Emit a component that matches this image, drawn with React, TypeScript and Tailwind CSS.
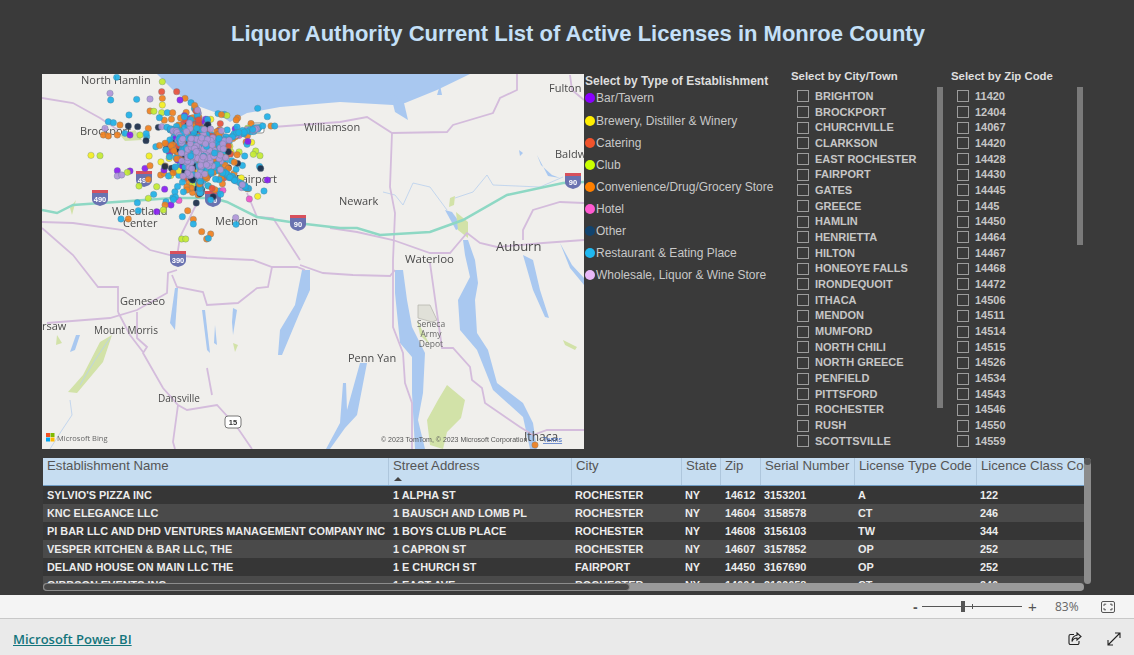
import React from "react";

const cities = ["BRIGHTON","BROCKPORT","CHURCHVILLE","CLARKSON","EAST ROCHESTER","FAIRPORT","GATES","GREECE","HAMLIN","HENRIETTA","HILTON","HONEOYE FALLS","IRONDEQUOIT","ITHACA","MENDON","MUMFORD","NORTH CHILI","NORTH GREECE","PENFIELD","PITTSFORD","ROCHESTER","RUSH","SCOTTSVILLE"];
const zips = ["11420","12404","14067","14420","14428","14430","14445","1445","14450","14464","14467","14468","14472","14506","14511","14514","14515","14526","14534","14543","14546","14550","14559"];

const legend = [
  { label: "Bar/Tavern", dot: "bg-[#8a00ff]" },
  { label: "Brewery, Distiller & Winery", dot: "bg-[#ffee00]" },
  { label: "Catering", dot: "bg-[#f0532c]" },
  { label: "Club", dot: "bg-[#c8ff00]" },
  { label: "Convenience/Drug/Grocery Store", dot: "bg-[#ff8000]" },
  { label: "Hotel", dot: "bg-[#ff5ad0]" },
  { label: "Other", dot: "bg-[#12446e]" },
  { label: "Restaurant & Eating Place", dot: "bg-[#1fb8f0]" },
  { label: "Wholesale, Liquor & Wine Store", dot: "bg-[#e8b8f8]" },
];

const rows = [
  ["SYLVIO'S PIZZA INC", "1 ALPHA ST", "ROCHESTER", "NY", "14612", "3153201", "A", "122"],
  ["KNC ELEGANCE LLC", "1 BAUSCH AND LOMB PL", "ROCHESTER", "NY", "14604", "3158578", "CT", "246"],
  ["PI BAR LLC AND DHD VENTURES MANAGEMENT COMPANY INC", "1 BOYS CLUB PLACE", "ROCHESTER", "NY", "14608", "3156103", "TW", "344"],
  ["VESPER KITCHEN & BAR LLC, THE", "1 CAPRON ST", "ROCHESTER", "NY", "14607", "3157852", "OP", "252"],
  ["DELAND HOUSE ON MAIN LLC THE", "1 E CHURCH ST", "FAIRPORT", "NY", "14450", "3167690", "OP", "252"],
  ["GIBBSON EVENTS INC", "1 EAST AVE", "ROCHESTER", "NY", "14604", "3169658", "CT", "246"],
];

const headers = ["Establishment Name", "Street Address", "City", "State", "Zip", "Serial Number", "License Type Code", "Licence Class Code"];
const gridCols = "grid-cols-[345px_183px_110px_39px_40px_94px_122px_108px]";

const C: Record<string, string> = {
  c: "#1fb0e6", l: "#b095d8", o: "#f0801e", p: "#8a1cf0", y: "#f4ee20", g: "#c4ea30", r: "#e8503a", n: "#1c2c48", h: "#f055c8",
};

// outlying pins, read off the 3x crop
const outliers: [number, number, string][] = [
  [230,22,"c"],[367,35,"g"],[365,65,"r"],[410,65,"r"],[210,70,"l"],[212,90,"c"],[290,88,"c"],[330,87,"l"],[367,85,"o"],[435,85,"o"],[367,105,"y"],[420,90,"p"],[453,98,"c"],[330,123,"o"],[267,135,"c"],[365,128,"g"],[382,128,"c"],[398,128,"o"],[205,155,"c"],[220,158,"c"],[240,165,"o"],[265,168,"n"],[293,170,"n"],[325,175,"o"],[355,172,"n"],[365,170,"l"],[195,175,"l"],[190,195,"o"],[205,198,"o"],[232,195,"o"],[255,190,"c"],[270,195,"p"],[300,195,"g"],[320,200,"c"],[318,212,"n"],[153,256,"y"],[180,257,"g"],[232,302,"p"],[270,303,"p"],[262,307,"g"],[232,318,"l"],[245,315,"l"],[315,295,"p"],[330,287,"o"],[325,328,"o"],[362,315,"o"],[372,310,"o"],[297,348,"g"],[350,350,"g"],[341,373,"c"],[325,385,"g"],[292,398,"c"],[378,395,"c"],[393,405,"p"],[375,405,"o"],[350,425,"p"],[370,420,"g"],[295,422,"c"],[243,447,"c"],[265,447,"o"],[427,440,"c"],[460,448,"o"],[460,462,"c"],[485,485,"o"],[512,492,"o"],[500,507,"o"],[505,505,"c"],[425,507,"g"],[437,507,"g"],[587,443,"l"],[588,463,"c"],[653,115,"c"],[682,140,"c"],[693,168,"o"],[704,168,"c"],[635,217,"y"],[647,243,"g"],[660,257,"g"],[640,253,"g"],[614,258,"c"],[672,363,"c"],[653,379,"y"],[682,330,"p"],[628,387,"h"],[1485,1125,"o"],
];

let seed = 4711;
const rnd = () => {
  seed = (seed * 16807) % 2147483647;
  return seed / 2147483647;
};
const gauss = () => (rnd() + rnd() + rnd() - 1.5) / 1.5;
const pick = (s: string) => s[Math.floor(rnd() * s.length)];

const makePins = () => {
  const pins: { x: number; y: number; c: string }[] = [];
  outliers.forEach(([x, y, c]) => pins.push({ x: 40 + x / 3, y: 70 + y / 3, c }));
  // wider metro area
  for (let i = 0; i < 160; i++) pins.push({ x: 205 + gauss() * 70, y: 155 + gauss() * 62, c: pick("cccooogrnyph") });
  // downtown
  for (let i = 0; i < 300; i++) pins.push({ x: 200 + gauss() * 48, y: 150 + gauss() * 48, c: pick("ooocccrnyp") });
  // main roads out of the city
  const spokes: [number, number, number, number, number, string][] = [
    [167, 128, 205, 145, 30, "ccl"],
    [205, 145, 262, 127, 44, "ccl"],
    [205, 160, 250, 190, 44, "cccclo"],
    [200, 165, 200, 198, 36, "cclon"],
    [178, 130, 190, 175, 24, "lcl"],
    [195, 106, 207, 150, 36, "llcor"],
    [208, 175, 170, 200, 10, "co"],
  ];
  spokes.forEach(([x1, y1, x2, y2, n, cols]) => {
    for (let i = 0; i < n; i++) {
      const t = rnd();
      pins.push({ x: x1 + (x2 - x1) * t + gauss() * 3, y: y1 + (y2 - y1) * t + gauss() * 3, c: pick(cols) });
    }
  });
  // wholesale pins sit on top
  for (let i = 0; i < 130; i++) pins.push({ x: 202 + gauss() * 36, y: 150 + gauss() * 34, c: pick("lllllc") });
  return pins;
};
const pins = makePins();

const roads = [
  "M42 98L73 103L100 118L118 130",
  "M273 127L340 122L367 117L392 133L447 132L453 125L493 113L500 98L517 90L517 74",
  "M392 133L390 187L395 213L393 260L393 327L403 353L405 383L412 403L412 449",
  "M42 222L73 223L123 230L150 250L170 255L207 258L253 260L272 267L297 267L305 270",
  "M42 228L73 255L98 287L118 287L118 312",
  "M47 323L110 318L137 310L167 293L168 273L177 270",
  "M137 312L137 338L147 347L143 353L163 388L178 405L187 410L217 405L237 427L252 449",
  "M118 312L130 335L143 352",
  "M178 405L173 442L175 449",
  "M272 267L268 287L257 288L238 303L207 305L203 292L177 287L172 275",
  "M300 265L323 273L353 275L390 276L395 270",
  "M430 263L438 320L442 348L453 348L470 367L472 380L482 388L485 403L520 427L533 435L547 430L584 430",
  "M330 228L357 232L393 240L430 253L450 253L467 233L480 243L497 247L543 243L584 240",
  "M523 240L523 230L533 210L560 202L584 203",
  "M570 75L572 90L584 100",
  "M197 203L180 237L177 257",
  "M247 193L257 217L273 218L300 260",
  "M207 368L212 395",
];

const rivers = [
  "M383 192L395 195L403 205L413 183L430 187L447 210",
  "M473 192L487 175L493 185L540 187L563 177",
  "M473 192L455 198",
  "M70 400L72 415L62 430L50 449",
  "M110 338L95 360L80 385",
];

const water = [
  "M157 74L173 90L190 103L217 113L230 122L247 113L280 107L340 102L393 105L405 103L437 90L470 74Z",
  "M395 270L403 270L407 300L412 327L425 353L423 393L418 420L425 449L415 449L412 393L412 357L400 343L395 293Z",
  "M463 240L468 240L475 260L478 283L475 300L477 333L488 350L497 383L523 403L533 423L537 449L530 449L523 417L493 390L477 350L460 330L458 300L470 277L465 255Z",
  "M523 255L533 260L540 290L549 318L545 317L533 290Z",
  "M560 243L572 265L584 278L584 285L570 268Z",
  "M302 270L310 270L310 290L300 312L282 355L278 355L280 330L295 305Z",
  "M343 383L346 383L347 410L360 363L367 363L357 415L345 428L330 449L326 449L340 423Z",
  "M175 288L178 288L175 330L170 323Z",
  "M202 310L205 310L210 353L207 350Z",
  "M215 325L217 345L214 343Z",
  "M233 308L237 310L233 335L232 322Z",
  "M76 335L80 335L75 350L70 352Z",
  "M437 95L440 85L442 95Z",
  "M537 155L541 165L552 175L560 178L548 176Z",
  "M519 150L523 153L520 156Z",
  "M445 210L452 212L463 227L456 230Z",
  "M390 92L404 103L408 120L395 112Z",
];

const green = [
  "M68 392L83 375L100 342L112 335L103 362L77 393Z",
  "M427 420L438 400L447 385L465 400L461 418L447 432L443 449L430 445Z",
  "M417 320L422 330L430 345L420 335Z",
  "M450 198L455 196L454 205L449 207Z",
  "M456 212L468 222L468 238L458 230Z",
  "M563 340L577 347L575 350L565 345Z",
  "M233 343L238 345L235 352Z",
  "M57 335L62 343L56 345Z",
  "M120 135L135 130L142 140L125 141Z",
  "M70 208L76 200L72 215Z",
];

const Shield = ({ x, y, label }: { x: number; y: number; label: string }) => (
  <g>
    <path d={`M${x - 8} ${y - 7}h16v9c0 4-4 6-8 7c-4-1-8-3-8-7z`} fill="#6a72b0" />
    <path d={`M${x - 8} ${y - 7}h16v3h-16z`} fill="#d8505c" />
    <text x={x} y={y + 5} textAnchor="middle" fontSize="7.5" fontWeight="700" fill="#fff" fontFamily="Liberation Sans, sans-serif">{label}</text>
  </g>
);

const MapLabel = ({ x, y, t, s = 11 }: { x: number; y: number; t: string; s?: number }) => (
  <text x={x} y={y} fontSize={s} fill="#4a4a4a" fontFamily="Open Sans, sans-serif">{t}</text>
);

const BingMap = () => (
  <svg viewBox="42 74 542 375" className="w-[542px] h-[375px] block blur-[0.3px]">
    <rect x="42" y="74" width="542" height="375" fill="#f0efec" />
    {water.map((d) => <path key={d} d={d} fill="#a9c8f0" />)}
    {green.map((d) => <path key={d} d={d} fill="#d2e2a8" />)}
    {rivers.map((d) => <path key={d} d={d} fill="none" stroke="#b8cfee" strokeWidth="0.8" />)}
    <path d="M418 305L430 305L437 320L432 322L418 318Z" fill="#e0e0d8" stroke="#b8b8b0" strokeWidth="0.8" />
    {roads.map((d) => <path key={d} d={d} fill="none" stroke="#d4bcdc" strokeWidth="1.8" />)}
    <path d="M42 210L57 213L73 205L173 198L213 198L227 202L257 217L297 223L340 228L357 228L380 235L430 232L463 220L507 195L563 183L584 182" fill="none" stroke="#8ed8c4" strokeWidth="2.5" />
    <Shield x={100} y={197} label="490" />
    <Shield x={144} y={178} label="490" />
    <Shield x={213} y={198} label="90" />
    <Shield x={298} y={222} label="90" />
    <Shield x={573} y={180} label="90" />
    <Shield x={178} y={258} label="390" />
    <rect x="225" y="416" width="16" height="12" rx="3" fill="#fff" stroke="#555" strokeWidth="0.8" />
    <text x="233" y="425" textAnchor="middle" fontSize="7.5" fontWeight="700" fill="#333" fontFamily="Liberation Sans, sans-serif">15</text>
    <rect x="249" y="123" width="15" height="10" rx="2" fill="#fff" stroke="#777" strokeWidth="0.8" />
    <MapLabel x={81} y={84} t="North Hamlin" />
    <MapLabel x={304} y={131} t="Williamson" />
    <MapLabel x={80} y={135} t="Brockport" />
    <MapLabel x={170} y={156} t="Rochester" />
    <MapLabel x={236} y={183} t="Fairport" />
    <MapLabel x={112} y={215} t="Wheatland" />
    <MapLabel x={123} y={227} t="Center" />
    <MapLabel x={215} y={225} t="Mendon" />
    <MapLabel x={339} y={205} t="Newark" />
    <MapLabel x={549} y={92} t="Fulton" />
    <MapLabel x={555} y={158} t="Baldw" />
    <MapLabel x={496} y={251} t="Auburn" s={13} />
    <MapLabel x={405} y={263} t="Waterloo" s={11.5} />
    <MapLabel x={120} y={305} t="Geneseo" />
    <MapLabel x={94} y={334} t="Mount Morris" s={10} />
    <MapLabel x={42} y={330} t="rsaw" />
    <MapLabel x={348} y={362} t="Penn Yan" />
    <MapLabel x={158} y={402} t="Dansville" s={10} />
    <MapLabel x={524} y={441} t="Ithaca" s={12} />
    <text x="431" y="327" textAnchor="middle" fontSize="8.5" fill="#6a6a6a" fontFamily="Open Sans, sans-serif">Seneca</text>
    <text x="431" y="337" textAnchor="middle" fontSize="8.5" fill="#6a6a6a" fontFamily="Open Sans, sans-serif">Army</text>
    <text x="431" y="347" textAnchor="middle" fontSize="8.5" fill="#6a6a6a" fontFamily="Open Sans, sans-serif">Depot</text>
    {pins.map((p, i) => (
      <circle key={i} cx={p.x} cy={p.y} r="3.2" fill={C[p.c]} fillOpacity="0.92" stroke="#5d7a8c" strokeOpacity="0.55" strokeWidth="0.6" />
    ))}
    <rect x="46" y="433" width="4" height="4" fill="#f25022" />
    <rect x="50.5" y="433" width="4" height="4" fill="#7fba00" />
    <rect x="46" y="437.5" width="4" height="4" fill="#00a4ef" />
    <rect x="50.5" y="437.5" width="4" height="4" fill="#ffb900" />
    <text x="57" y="441" fontSize="7.5" fill="#666" fontFamily="Open Sans, sans-serif">Microsoft Bing</text>
    <text x="381" y="442" fontSize="7" fill="#555" fontFamily="Liberation Sans, sans-serif">© 2023 TomTom, © 2023 Microsoft Corporation</text>
    <text x="543" y="442" fontSize="7" fill="#3a66c0" textDecoration="underline" fontFamily="Liberation Sans, sans-serif">Terms</text>
  </svg>
);

const CheckList = ({ title, items, thumb, w }: { title: string; items: string[]; thumb: string; w: string }) => (
  <div className={`${w} relative flex flex-col`}>
    <div className="h-[14px] -mt-[5px] mb-[5.6px] pl-[1px] text-[11.4px] leading-[14px] font-bold text-[#dedede]">{title}</div>
    <div className="pl-[7px]">
      {items.map((it) => (
        <div key={it} className="h-[15.68px] flex items-center gap-[6px]">
          <span className="w-[12px] h-[12px] border border-[#9c9c9c] shrink-0" />
          <span className="text-[11px] font-bold text-[#c6c6c6] leading-none">{it}</span>
        </div>
      ))}
    </div>
    <div className={`absolute top-[13px] right-0 w-[6px] bg-[#7a7a7a] ${thumb}`} />
  </div>
);

export default function App() {
  return (
    <div className="w-[1134px] h-[655px] flex flex-col overflow-hidden font-['Liberation_Sans',Arial,sans-serif]">
      <main className="h-[595px] bg-[#3a3a3a] flex flex-col">
        <h1 className="h-[74px] pt-[20px] pl-[22px] text-center text-[22px] leading-[28px] font-bold text-[#c4e0f8]">
          Liquor Authority Current List of Active Licenses in Monroe County
        </h1>

        <div className="flex h-[375px] pl-[42px]">
          <div className="w-[542px] shrink-0">
            <BingMap />
          </div>

          {/* type legend */}
          <div className="w-[206px] pl-[1px] shrink-0">
            <div className="h-[14px] text-[12px] leading-[14px] font-bold text-[#dedede]">Select by Type of Establishment</div>
            <div className="mt-[-1px]">
              {legend.map((l, i) => (
                <div key={l.label} className={`h-[22px] flex items-center ${i === 0 ? "mb-[0.5px]" : ""}`}>
                  <span className={`w-[10px] h-[10px] rounded-full shrink-0 ${l.dot}`} />
                  <span className="ml-[1px] text-[12px] text-[#c8c8c8] leading-none">{l.label}</span>
                </div>
              ))}
            </div>
          </div>

          <CheckList title="Select by City/Town" items={cities} thumb="h-[321px]" w="w-[153px] mr-[7px]" />
          <CheckList title="Select by Zip Code" items={zips} thumb="h-[158px]" w="w-[133px]" />
        </div>

        {/* licenses table */}
        <div className="relative ml-[43px] mt-[9px] w-[1049px] h-[134px]">
          <div className="w-[1041px] h-[132px] overflow-hidden">
            <div className={`grid ${gridCols} h-[28px] bg-[#c6ddf1] border-b border-[#6f9cc4]`}>
              {headers.map((h, i) => (
                <div key={h} className={`relative pl-[4px] text-[13.2px] leading-[15px] text-[#555] whitespace-nowrap overflow-hidden ${i > 0 ? "border-l border-[#aec6dc]" : ""}`}>
                  {h}
                  {i === 1 && <span className="absolute left-[5px] top-[19px] w-0 h-0 border-x-[4px] border-x-transparent border-b-[4px] border-b-[#444]" />}
                </div>
              ))}
            </div>
            {rows.map((r, idx) => (
              <div key={r[0]} className={`grid ${gridCols} h-[18px] ${idx % 2 === 0 ? "bg-[#363636]" : "bg-[#4a4a4a]"}`}>
                {r.map((c, i) => (
                  <div key={i} className={`${i === 1 || i === 4 ? "pl-[5px]" : "pl-[4px]"} text-[10.9px] leading-[18px] font-bold text-[#ececec] whitespace-nowrap overflow-hidden`}>{c}</div>
                ))}
              </div>
            ))}
          </div>
          {/* scrollbars over the table */}
          <div className="absolute left-0 top-[125px] w-[1041px] h-[8px] rounded-full bg-[#9a9a9a]">
            <div className="w-[587px] h-[8px] rounded-full bg-[#484848] border border-[#8c8c8c]" />
          </div>
          <div className="absolute left-[1041px] top-0 w-[7px] h-[126px] rounded-full bg-[#8c8c8c]">
            <div className="w-[7px] h-[7px] rounded-full bg-[#555]" />
          </div>
        </div>
      </main>

      {/* zoom bar */}
      <div className="h-[24px] bg-[#f4f4f4] border-b border-[#c8c8c8] flex items-center justify-end text-[#555]">
        <span className="w-[8px] text-[14px] font-bold leading-none mr-[1px]">-</span>
        <div className="relative w-[100px] h-[1px] bg-[#555]">
          <span className="absolute left-[39px] -top-[5px] w-[4px] h-[11px] bg-[#555]" />
          <span className="absolute left-[50px] -top-[2px] w-[1px] h-[5px] bg-[#555]" />
        </div>
        <span className="ml-[6px] w-[9px] text-[15px] leading-none">+</span>
        <span className="ml-[18px] w-[24px] text-[12px] font-['Open_Sans',sans-serif] text-[#666]">83%</span>
        <svg viewBox="0 0 14 12" className="ml-[22px] mr-[19px] w-[14px] h-[12px]" fill="none" stroke="#555" strokeWidth="1">
          <rect x="0.5" y="0.5" width="13" height="11" rx="1.5" />
          <path d="M3 5V3.2H5.2M9 3.2H11V5M11 7V8.8H9M5 8.8H3V7" />
        </svg>
      </div>

      {/* footer */}
      <footer className="flex-1 bg-[#eaeaea] flex items-center justify-between pl-[13px]">
        <a className="text-[13px] font-semibold underline text-[#14757c] font-['Open_Sans',sans-serif] mt-[5px]">Microsoft Power BI</a>
        <div className="flex items-center gap-[25px] mr-[13px] mt-[3px]">
          <svg viewBox="0 0 14 14" className="w-[14px] h-[14px]" fill="none" stroke="#222" strokeWidth="1.1">
            <path d="M6 2.5H2.5a1.5 1.5 0 0 0-1.5 1.5v7a1.5 1.5 0 0 0 1.5 1.5h7a1.5 1.5 0 0 0 1.5-1.5V9" />
            <path d="M9 1l4 3.5L9 8V6C6.500 6 5 7 4 9.500C4 6 6 3.500 9 3.200z" />
          </svg>
          <svg viewBox="0 0 14 14" className="w-[14px] h-[14px]" fill="none" stroke="#222" strokeWidth="1.1">
            <path d="M1 13L13 1M8 1h5v5M1 8v5h5" />
          </svg>
        </div>
      </footer>
    </div>
  );
}
